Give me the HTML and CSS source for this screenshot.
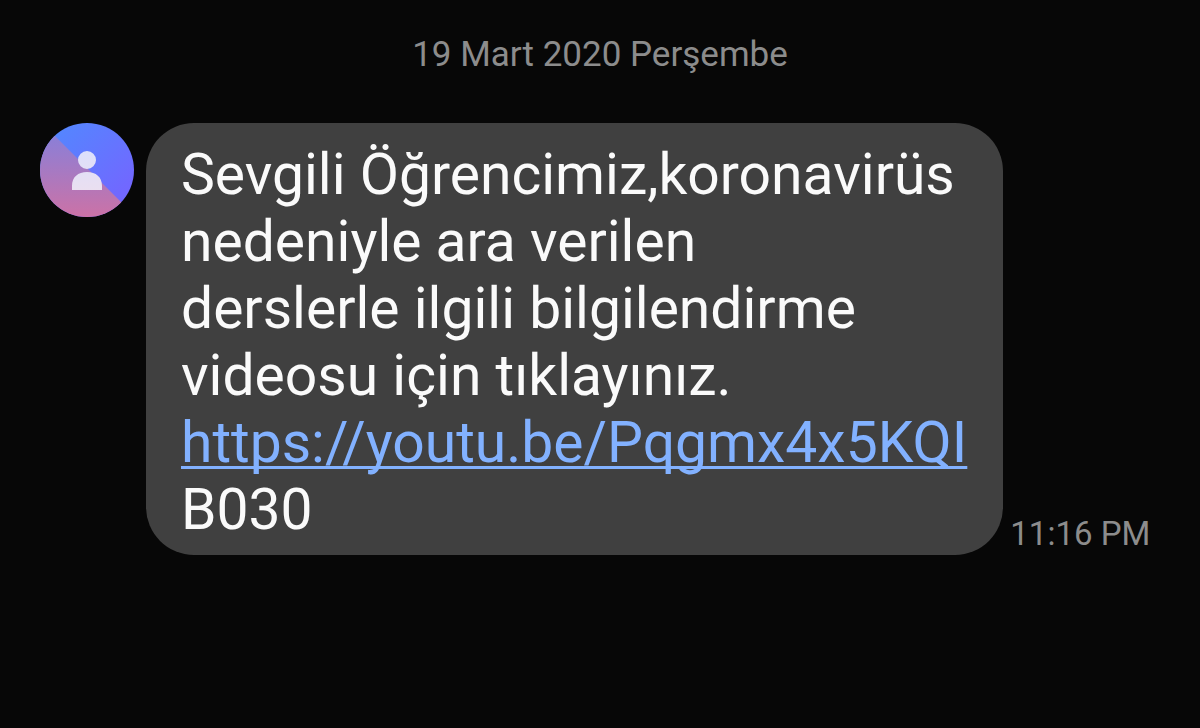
FILE: index.html
```html
<!DOCTYPE html>
<html lang="tr">
<head>
<meta charset="utf-8">
<meta name="viewport" content="width=device-width, initial-scale=1">
<title>Mesajlar</title>
<link rel="stylesheet" href="styles.css">
</head>
<body>
<main class="thread">
  <h1 class="date">19 Mart 2020 Perşembe</h1>
  <article class="message">
    <svg class="avatar" viewBox="0 0 94 94" aria-hidden="true">
      <defs>
        <linearGradient id="upper" x1="0" y1="0" x2="1" y2="1">
          <stop offset="0.1" stop-color="#5387ff"/>
          <stop offset="0.8" stop-color="#7168ff"/>
        </linearGradient>
        <linearGradient id="lower" x1="0" y1="0" x2="0" y2="1">
          <stop offset="0.15" stop-color="#8a7fd8"/>
          <stop offset="1" stop-color="#cc72a6"/>
        </linearGradient>
        <linearGradient id="person" x1="0" y1="0" x2="0" y2="1">
          <stop offset="0" stop-color="#dcdffc"/>
          <stop offset="1" stop-color="#eadff0"/>
        </linearGradient>
        <clipPath id="disc"><circle cx="47" cy="47" r="47"/></clipPath>
      </defs>
      <g clip-path="url(#disc)">
        <rect width="94" height="94" fill="url(#upper)"/>
        <path d="M0 -2L96 94H0Z" fill="url(#lower)"/>
      </g>
      <path d="M47 28a9 9 0 0 1 0 18a9 9 0 0 1 0 -18ZM32 67V63C32 54 38 49 47 49S62 54 62 63V67Z" fill="url(#person)"/>
    </svg>
    <p class="bubble">Sevgili Öğrencimiz,koronavirüs<br>nedeniyle ara verilen<br>derslerle ilgili bilgilendirme<br>videosu için tıklayınız.<br><a class="link" href="https://youtu.be/Pqgmx4x5KQI">https://youtu.be/Pqgmx4x5KQI</a><br>B030</p>
    <time class="time" datetime="2020-03-19T23:16">11:16 PM</time>
  </article>
</main>
</body>
</html>
```
FILE: styles.css
```css
body {
  margin: 0;
  background: #070707;
  color: #fafafa;
  font-family: Roboto, "Noto Sans", sans-serif;
}

.thread {
  padding: 33px 40px;
}

.date {
  margin: 0 0 46px;
  color: #8c8c8c;
  font-size: 35px;
  font-weight: 400;
  line-height: 44px;
  text-align: center;
}

.message {
  display: flex;
  align-items: flex-start;
}

.avatar {
  flex: none;
  width: 94px;
  height: 94px;
  margin-right: 12px;
}

.bubble {
  margin: 0;
  padding: 18px 36px 12px 35px;
  border-radius: 48px;
  background: #404040;
  font-size: 57px;
  line-height: 67px;
}

.link {
  color: #82b1ff;
  text-decoration-thickness: 3px;
  text-decoration-skip-ink: none;
  text-underline-offset: 4px;
}

.time {
  align-self: flex-end;
  margin: 0 0 1px 7px;
  color: #8c8c8c;
  font-size: 33px;
  line-height: 40px;
  white-space: nowrap;
}
```
